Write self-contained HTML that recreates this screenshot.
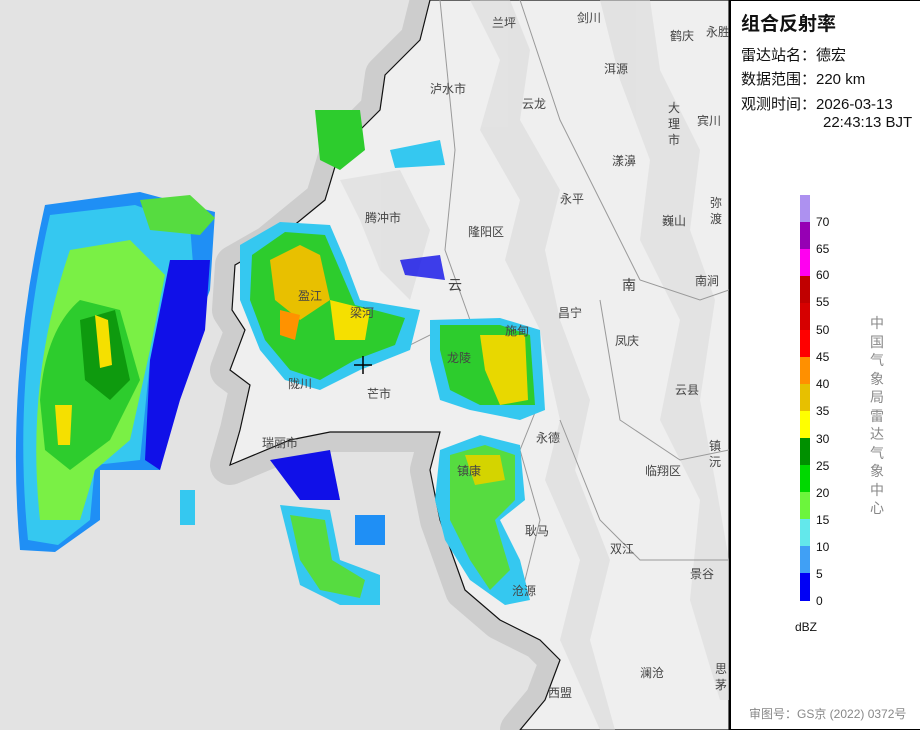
<!DOCTYPE html>
<html><head><meta charset="utf-8"><style>
html,body{margin:0;padding:0;width:920px;height:730px;overflow:hidden;background:#fff;font-family:"Liberation Sans","Noto Sans CJK SC",sans-serif}
#map{position:absolute;left:0;top:0;width:729px;height:730px}
#panel{position:absolute;left:729px;top:0;width:189px;height:728px;border:1px solid #000;border-left:2px solid #000;background:#fff}
.t{position:absolute;left:10px;font-size:15px;color:#111;white-space:nowrap}
.cb{position:absolute;left:69px;width:10px}
.lb{position:absolute;left:85px;font-size:12px;color:#111}
</style></head><body>
<svg id="map" width="729" height="730" viewBox="0 0 729 730" font-family="Liberation Sans, Noto Sans CJK SC, sans-serif">
<rect width="729" height="730" fill="#e3e3e3"/>
<path d="M430,0 L420,40 L385,75 L380,110 L340,150 L325,200 L270,245 L235,265 L232,310 L245,330 L230,370 L250,385 L240,430 L230,465 L290,440 L330,432 L440,432 L430,470 L440,520 L465,590 L500,620 L540,640 L560,660 L545,700 L520,730 L729,730 L729,0Z" fill="#cdcdcd" stroke="#cdcdcd" stroke-width="40" stroke-linejoin="round"/>
<path d="M430,0 L420,40 L385,75 L380,110 L340,150 L325,200 L270,245 L235,265 L232,310 L245,330 L230,370 L250,385 L240,430 L230,465 L290,440 L330,432 L440,432 L430,470 L440,520 L465,590 L500,620 L540,640 L560,660 L545,700 L520,730 L729,730 L729,0Z" fill="#efefef" stroke="#111" stroke-width="1.2"/>
<g fill="#d8d8d8" opacity="0.55">
<path d="M470,0 L500,60 L480,130 L520,200 L505,260 L540,330 L560,420 L545,480 L580,560 L560,640 L600,730 L615,730 L590,640 L610,560 L575,470 L590,400 L560,320 L545,250 L560,190 L520,120 L530,50 L510,0Z"/>
<path d="M600,0 L620,80 L650,160 L640,240 L680,320 L660,420 L700,500 L690,600 L720,700 L729,700 L729,560 L715,480 L700,400 L715,300 L690,230 L700,150 L660,70 L650,0Z"/>
<path d="M340,180 L400,170 L430,230 L410,300 L380,270 L360,220Z"/>
</g>
<g fill="none" stroke="#999" stroke-width="1">
<path d="M440,0 L455,150 L445,250 L470,320 L520,330 L540,400 L520,450 L540,520 L520,600"/>
<path d="M520,0 L560,120 L600,200 L640,280 L700,300 L729,290"/>
<path d="M600,300 L620,420 L680,460 L729,450"/>
<path d="M560,420 L600,520 L640,560 L729,560"/>
<path d="M300,330 L380,360 L440,330 L470,380"/>
</g>
<path d="M20,550 Q5,380 45,205 L140,192 L215,212 L210,290 L195,330 L160,470 L100,470 L100,520 L55,552Z" fill="#1f8ff5"/>
<path d="M28,540 Q12,380 50,215 L135,205 L190,225 L195,290 L150,360 L140,460 L95,465 L90,520 L58,545Z" fill="#35c8f0"/>
<path d="M40,520 Q25,380 70,250 L130,240 L165,275 L150,350 L130,440 L95,470 L80,520Z" fill="#7af045"/>
<path d="M170,260 L210,260 L205,330 L180,400 L160,470 L145,460 L150,360Z" fill="#1010e8"/>
<path d="M40,400 Q45,330 80,300 L120,310 L140,380 L110,440 L70,470 L45,450Z" fill="#2dcc2d"/>
<path d="M80,320 L115,310 L130,380 L110,400 L85,380Z" fill="#0e9a0e"/>
<path d="M95,315 L108,320 L112,365 L100,368Z" fill="#f5e000"/>
<path d="M55,405 L72,405 L70,445 L58,445Z" fill="#f5e000"/>
<path d="M240,245 L280,222 L330,225 L345,260 L360,300 L420,310 L410,350 L360,370 L320,390 L285,380 L260,350 L240,300Z" fill="#35c8f0"/>
<path d="M252,255 L285,232 L325,235 L340,270 L355,305 L405,318 L395,345 L355,360 L320,380 L290,370 L265,340 L250,300Z" fill="#2dcc2d"/>
<path d="M270,260 L300,245 L320,255 L330,300 L300,320 L275,300Z" fill="#e8c000"/>
<path d="M330,300 L370,310 L365,340 L335,340Z" fill="#f5e000"/>
<path d="M280,310 L300,315 L295,340 L280,335Z" fill="#ff9200"/>
<path d="M430,320 L500,318 L540,330 L545,410 L520,420 L470,410 L440,400 L430,360Z" fill="#35c8f0"/>
<path d="M440,325 L500,325 L530,335 L535,405 L480,405 L450,390 L440,350Z" fill="#2dcc2d"/>
<path d="M480,335 L525,335 L528,400 L500,405 L485,370Z" fill="#e8d800"/>
<path d="M440,450 L480,435 L520,445 L525,500 L500,520 L520,560 L530,600 L505,605 L470,580 L445,540 L435,500Z" fill="#35c8f0"/>
<path d="M450,455 L485,445 L515,455 L515,500 L495,520 L510,570 L490,590 L470,560 L450,520Z" fill="#56dc40"/>
<path d="M465,455 L500,455 L505,480 L475,485Z" fill="#d4d400"/>
<path d="M270,460 L330,450 L340,500 L300,500 L285,480Z" fill="#1010e8"/>
<path d="M280,505 L330,510 L340,560 L380,575 L380,605 L340,605 L300,585 L290,545Z" fill="#35c8f0"/>
<path d="M290,515 L325,520 L332,560 L365,580 L360,598 L320,590 L300,560Z" fill="#56dc40"/>
<path d="M315,110 L360,110 L365,150 L340,170 L320,160Z" fill="#2dcc2d"/>
<path d="M390,150 L440,140 L445,165 L395,168Z" fill="#35c8f0"/>
<path d="M140,200 L190,195 L215,218 L200,235 L150,230Z" fill="#56dc40"/>
<path d="M400,260 L440,255 L445,280 L405,275Z" fill="#1010e8" opacity="0.8"/>
<path d="M180,490 L195,490 L195,525 L180,525Z" fill="#35c8f0"/>
<path d="M355,515 L385,515 L385,545 L355,545Z" fill="#1f8ff5"/>
<path d="M354,365 H372 M363,356 V374" stroke="#000" stroke-width="1.5"/>
<g font-size="12" fill="#444">
<text x="492" y="27">兰坪</text><text x="577" y="22">剑川</text><text x="670" y="40">鹤庆</text><text x="706" y="36">永胜</text>
<text x="430" y="93">泸水市</text><text x="604" y="73">洱源</text><text x="522" y="108">云龙</text>
<text x="668" y="112">大</text><text x="668" y="128">理</text><text x="668" y="144">市</text><text x="697" y="125">宾川</text>
<text x="612" y="165">漾濞</text><text x="560" y="203">永平</text><text x="662" y="225">巍山</text><text x="710" y="207">弥</text><text x="710" y="223">渡</text>
<text x="365" y="222">腾冲市</text><text x="468" y="236">隆阳区</text><text x="448" y="290" font-size="14">云</text><text x="622" y="290" font-size="14">南</text><text x="695" y="285">南涧</text>
<text x="558" y="317">昌宁</text><text x="615" y="345">凤庆</text><text x="298" y="300">盈江</text><text x="350" y="317">梁河</text><text x="505" y="335">施甸</text><text x="447" y="362">龙陵</text>
<text x="675" y="394">云县</text><text x="288" y="388">陇川</text><text x="367" y="398">芒市</text><text x="262" y="447">瑞丽市</text>
<text x="536" y="442">永德</text><text x="709" y="450">镇</text><text x="709" y="466">沅</text><text x="645" y="475">临翔区</text><text x="457" y="475">镇康</text>
<text x="525" y="535">耿马</text><text x="610" y="553">双江</text><text x="690" y="578">景谷</text><text x="512" y="595">沧源</text>
<text x="640" y="677">澜沧</text><text x="715" y="673">思</text><text x="715" y="689">茅</text><text x="548" y="697">西盟</text>
</g>
</svg>
<div id="panel">
<div class="t" style="top:8px;font-size:19px;font-weight:bold">组合反射率</div>
<div class="t" style="top:43px">雷达站名：德宏</div>
<div class="t" style="top:67px">数据范围：220 km</div>
<div class="t" style="top:92px">观测时间：2026-03-13</div>
<div class="t" style="top:113px;left:92px">22:43:13 BJT</div>
<div class="cb" style="top:194px;height:27px;background:#ad91f0"></div>
<div class="cb" style="top:221px;height:27px;background:#9600b4"></div>
<div class="cb" style="top:248px;height:27px;background:#ff00f0"></div>
<div class="cb" style="top:275px;height:27px;background:#c00000"></div>
<div class="cb" style="top:302px;height:27px;background:#d60000"></div>
<div class="cb" style="top:329px;height:27px;background:#ff0000"></div>
<div class="cb" style="top:356px;height:27px;background:#ff9000"></div>
<div class="cb" style="top:383px;height:27px;background:#e7c000"></div>
<div class="cb" style="top:410px;height:27px;background:#ffff00"></div>
<div class="cb" style="top:437px;height:27px;background:#009000"></div>
<div class="cb" style="top:464px;height:27px;background:#00d800"></div>
<div class="cb" style="top:491px;height:27px;background:#6cf53c"></div>
<div class="cb" style="top:518px;height:27px;background:#63e8eb"></div>
<div class="cb" style="top:545px;height:27px;background:#40a0f5"></div>
<div class="cb" style="top:572px;height:28px;background:#0000f5"></div>
<div class="lb" style="top:214px">70</div><div class="lb" style="top:241px">65</div><div class="lb" style="top:267px">60</div><div class="lb" style="top:294px">55</div><div class="lb" style="top:322px">50</div><div class="lb" style="top:349px">45</div><div class="lb" style="top:376px">40</div><div class="lb" style="top:403px">35</div><div class="lb" style="top:431px">30</div><div class="lb" style="top:458px">25</div><div class="lb" style="top:485px">20</div><div class="lb" style="top:512px">15</div><div class="lb" style="top:539px">10</div><div class="lb" style="top:566px">5</div><div class="lb" style="top:593px">0</div>
<div class="lb" style="top:619px;left:64px">dBZ</div>
<div style="position:absolute;left:139px;top:313px;width:16px;font-size:14px;line-height:18.5px;color:#888">中国气象局雷达气象中心</div>
<div style="position:absolute;left:18px;top:704px;font-size:12px;color:#888;white-space:nowrap">审图号：GS京 (2022) 0372号</div>
</div>
</body></html>
